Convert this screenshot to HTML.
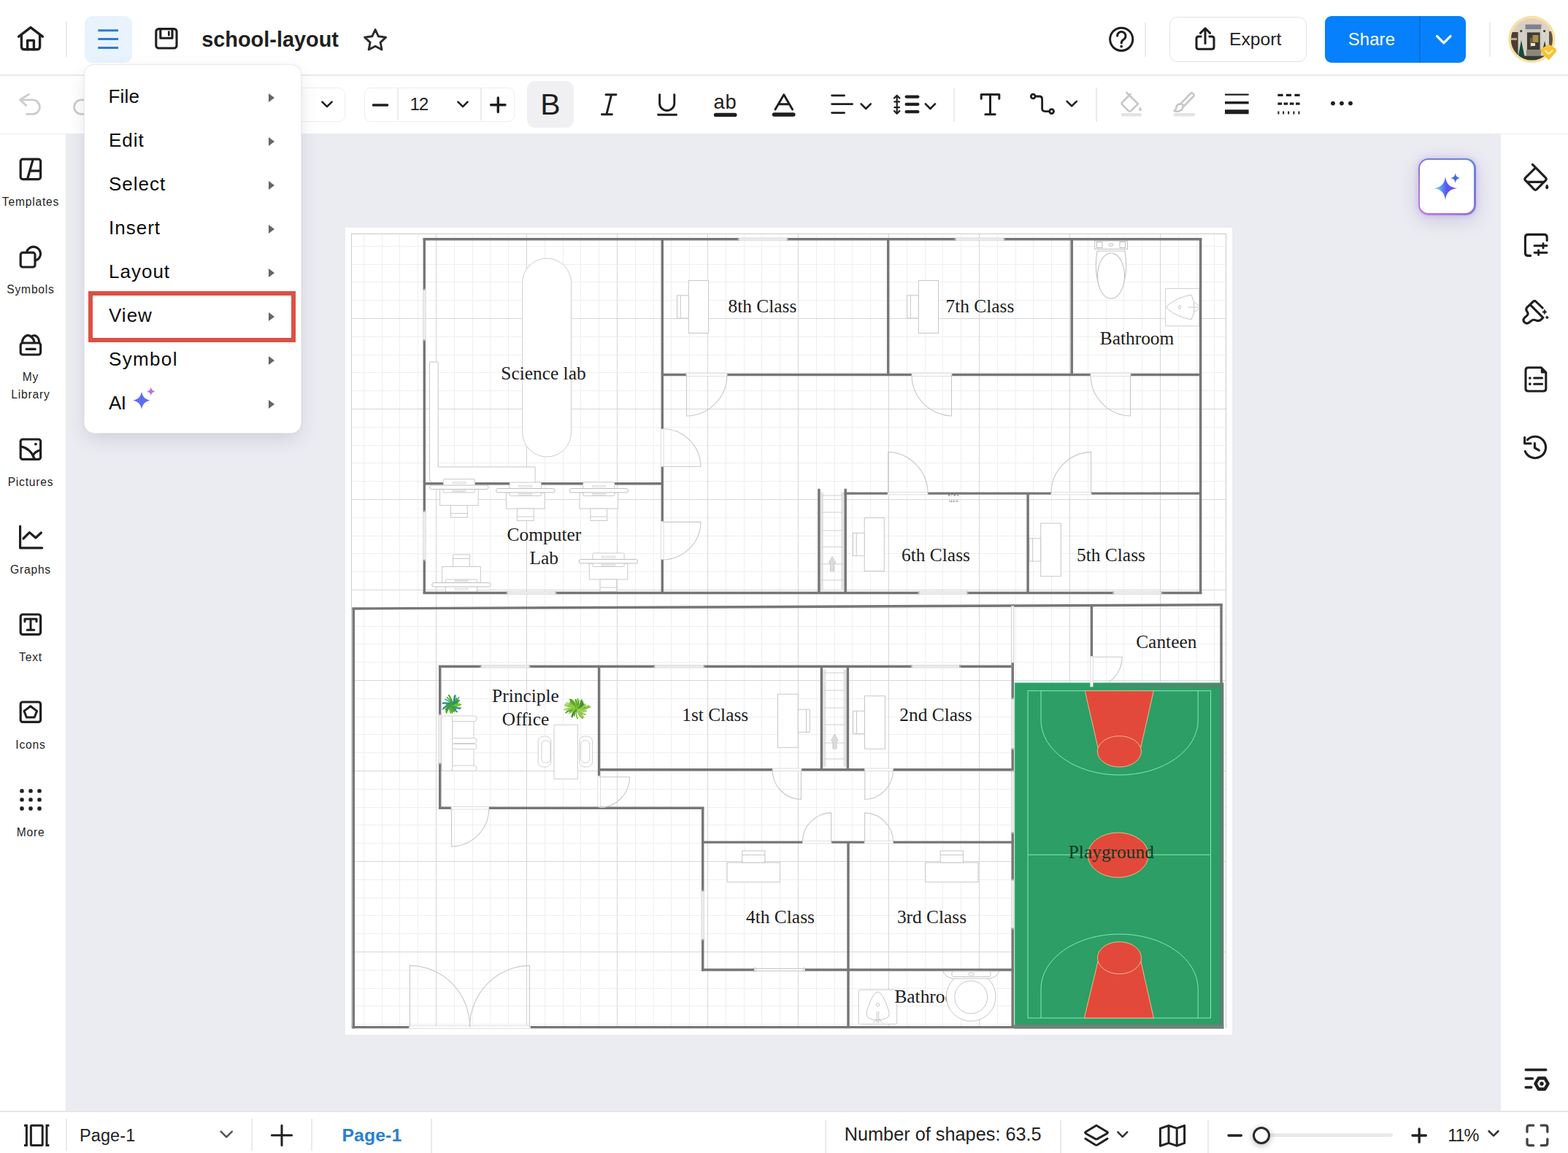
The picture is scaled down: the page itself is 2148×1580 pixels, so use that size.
<!DOCTYPE html>
<html lang="en">
<head>
<meta charset="utf-8">
<title>school-layout</title>
<style>
*{box-sizing:border-box;margin:0;padding:0}
html,body{width:2148px;height:1580px;overflow:hidden;background:#ebebf2}
body{position:relative;font-family:"Liberation Sans",sans-serif;color:#1e1e1e}
.abs{position:absolute}
.t{position:absolute;white-space:nowrap;line-height:1}
#canvas{position:absolute;left:0;top:0;width:2148px;height:1580px;background:#ebebf2}
#topbar{position:absolute;left:0;top:0;width:2148px;height:104px;background:#fff;border-bottom:2px solid #e9e9eb}
#toolbar{position:absolute;left:0;top:104px;width:2148px;height:80px;background:#fff;border-bottom:1px solid #ececee}
#leftbar{position:absolute;left:0;top:184px;width:90px;height:1340px;background:#fff}
#rightbar{position:absolute;left:2056px;top:184px;width:92px;height:1340px;background:#fff}
#bottombar{position:absolute;left:0;top:1521.6px;width:2148px;height:59px;background:#fff;border-top:2px solid #e6e6e8}
.vdiv{position:absolute;width:2px;background:#ebebed}
.lbl{position:absolute;left:0;width:84px;text-align:center;font-size:15.6px;letter-spacing:.8px;line-height:24px;color:#1e1e1e}
#menu{position:absolute;left:115px;top:88px;width:298px;height:506px;background:#fff;border-radius:14px;border:1px solid #ececee;box-shadow:0 10px 26px -4px rgba(60,60,90,.17),0 0 2px rgba(60,60,90,.08)}
.mi{position:absolute;left:33px;font-size:26px;letter-spacing:1px;line-height:30px;color:#0c0c0c;white-space:nowrap}
.arr{position:absolute;left:252px;width:0;height:0;border-left:8px solid #666;border-top:6px solid transparent;border-bottom:6px solid transparent}
svg{position:absolute;left:0;top:0;overflow:visible}
.plan text{font-family:"Liberation Serif",serif;font-size:25.4px;fill:#1c1c1c}
</style>
</head>
<body>
<div id="canvas"></div>
<div class="abs" style="left:473px;top:312px;width:1215px;height:1106px;background:#fff"></div>
<svg class="plan" width="2148" height="1580" viewBox="0 0 2148 1580">
<defs><clipPath id="gclip"><rect x="481.2" y="320.4" width="1198.5" height="1089"/></clipPath></defs>
<g shape-rendering="crispEdges" fill="none"><path d="M498.2 320.4V1409.4M523.0 320.4V1409.4M547.8 320.4V1409.4M572.6 320.4V1409.4M622.2 320.4V1409.4M647.0 320.4V1409.4M671.8 320.4V1409.4M696.6 320.4V1409.4M746.2 320.4V1409.4M771.0 320.4V1409.4M795.8 320.4V1409.4M820.6 320.4V1409.4M870.2 320.4V1409.4M895.0 320.4V1409.4M919.8 320.4V1409.4M944.6 320.4V1409.4M994.2 320.4V1409.4M1019.0 320.4V1409.4M1043.8 320.4V1409.4M1068.6 320.4V1409.4M1118.2 320.4V1409.4M1143.0 320.4V1409.4M1167.8 320.4V1409.4M1192.6 320.4V1409.4M1242.2 320.4V1409.4M1267.0 320.4V1409.4M1291.8 320.4V1409.4M1316.6 320.4V1409.4M1366.2 320.4V1409.4M1391.0 320.4V1409.4M1415.8 320.4V1409.4M1440.6 320.4V1409.4M1490.2 320.4V1409.4M1515.0 320.4V1409.4M1539.8 320.4V1409.4M1564.6 320.4V1409.4M1614.2 320.4V1409.4M1639.0 320.4V1409.4M1663.8 320.4V1409.4M481.2 337.3H1679.7M481.2 362.1H1679.7M481.2 386.9H1679.7M481.2 411.7H1679.7M481.2 461.3H1679.7M481.2 486.1H1679.7M481.2 510.9H1679.7M481.2 535.7H1679.7M481.2 585.3H1679.7M481.2 610.1H1679.7M481.2 634.9H1679.7M481.2 659.7H1679.7M481.2 709.3H1679.7M481.2 734.1H1679.7M481.2 758.9H1679.7M481.2 783.7H1679.7M481.2 833.3H1679.7M481.2 858.1H1679.7M481.2 882.9H1679.7M481.2 907.7H1679.7M481.2 957.3H1679.7M481.2 982.1H1679.7M481.2 1006.9H1679.7M481.2 1031.7H1679.7M481.2 1081.3H1679.7M481.2 1106.1H1679.7M481.2 1130.9H1679.7M481.2 1155.7H1679.7M481.2 1205.3H1679.7M481.2 1230.1H1679.7M481.2 1254.9H1679.7M481.2 1279.7H1679.7M481.2 1329.3H1679.7M481.2 1354.1H1679.7M481.2 1378.9H1679.7M481.2 1403.7H1679.7" stroke="#efefef" stroke-width="1"/><path d="M597.4 320.4V1409.4M721.4 320.4V1409.4M845.4 320.4V1409.4M969.4 320.4V1409.4M1093.4 320.4V1409.4M1217.4 320.4V1409.4M1341.4 320.4V1409.4M1465.4 320.4V1409.4M1589.4 320.4V1409.4M481.2 436.5H1679.7M481.2 560.5H1679.7M481.2 684.5H1679.7M481.2 808.5H1679.7M481.2 932.5H1679.7M481.2 1056.5H1679.7M481.2 1180.5H1679.7M481.2 1304.5H1679.7" stroke="#d6d6d6" stroke-width="1"/>
<path d="M481.2 1409.4V320.4H1679.7V1409.4" stroke="#cbcbcb" stroke-width="1"/></g>
<rect x="715.7" y="354" width="66.8" height="272" rx="33.4" fill="#fff" stroke="#cdcdcd" stroke-width="1"/>
<path d="M588.5 496H600.2V639.9H733.1V662H596Q588.5 662 588.5 654Z" fill="#fff" stroke="#c6c6c6" stroke-width="1"/>
<rect x="943.3" y="384.4" width="27.3" height="72.1" rx="0" fill="#fff" stroke="#c6c6c6" stroke-width="1"/>
<rect x="927.5" y="404.84999999999997" width="15.8" height="31.2" rx="0" fill="#fff" stroke="#c6c6c6" stroke-width="1"/>
<line x1="932.3" y1="404.84999999999997" x2="932.3" y2="436.05" stroke="#c6c6c6"/>
<rect x="1258.3" y="384.4" width="27.3" height="72.1" rx="0" fill="#fff" stroke="#c6c6c6" stroke-width="1"/>
<rect x="1242.5" y="404.84999999999997" width="15.8" height="31.2" rx="0" fill="#fff" stroke="#c6c6c6" stroke-width="1"/>
<line x1="1247.3" y1="404.84999999999997" x2="1247.3" y2="436.05" stroke="#c6c6c6"/>
<rect x="1184.2" y="709.5" width="27.1" height="73.1" rx="0" fill="#fff" stroke="#c6c6c6" stroke-width="1"/>
<rect x="1168.4" y="730.4499999999999" width="15.8" height="31.2" rx="0" fill="#fff" stroke="#c6c6c6" stroke-width="1"/>
<line x1="1173.2" y1="730.4499999999999" x2="1173.2" y2="761.65" stroke="#c6c6c6"/>
<rect x="1425.7" y="717.1" width="27.6" height="72.7" rx="0" fill="#fff" stroke="#c6c6c6" stroke-width="1"/>
<rect x="1409.9" y="737.85" width="15.8" height="31.2" rx="0" fill="#fff" stroke="#c6c6c6" stroke-width="1"/>
<line x1="1414.7" y1="737.85" x2="1414.7" y2="769.0500000000001" stroke="#c6c6c6"/>
<rect x="1499.8" y="330" width="44.6" height="11.3" rx="0" fill="#fff" stroke="#bdbdbd" stroke-width="1"/>
<rect x="1502.5" y="331.5" width="7.5" height="8.0" rx="0" fill="#fff" stroke="#bdbdbd" stroke-width="1"/>
<rect x="1534" y="331.5" width="7.5" height="8.0" rx="0" fill="#fff" stroke="#bdbdbd" stroke-width="1"/>
<ellipse cx="1522" cy="335.5" rx="3" ry="1.8" fill="#fff" stroke="#bdbdbd"/>
<path d="M1503 344Q1498 375 1508 397Q1522 420 1536 397Q1546 375 1541 344Z" fill="#fff" stroke="#c2c2c2" stroke-width="1.1"/>
<ellipse cx="1522" cy="378" rx="18.5" ry="31" fill="#fff" stroke="#c2c2c2" stroke-width="1.1"/>
<rect x="1596.6" y="395.4" width="46.4" height="51.3" rx="0" fill="#fff" stroke="#d0d0d0" stroke-width="1"/>
<path d="M1632 404Q1640 421 1632 438Q1612 434 1600 424Q1596 421 1600 418Q1612 408 1632 404Z" fill="#fff" stroke="#c6c6c6"/>
<circle cx="1616" cy="421" r="2" fill="none" stroke="#c6c6c6"/><path d="M1627 421H1642M1636 414L1642 419M1636 428L1642 423" stroke="#c9c9c9" fill="none"/>
<rect x="1123.7" y="673.7" width="4.2" height="134.69999999999993" rx="2" fill="#e3e3e3"/>
<rect x="1152.2" y="673.7" width="4.2" height="134.69999999999993" rx="2" fill="#e3e3e3"/>
<line x1="1125.9" y1="679" x2="1154.2" y2="679" stroke="#cfcfcf" stroke-width="1"/>
<line x1="1125.9" y1="702" x2="1154.2" y2="702" stroke="#cfcfcf" stroke-width="1"/>
<line x1="1125.9" y1="727" x2="1154.2" y2="727" stroke="#cfcfcf" stroke-width="1"/>
<line x1="1125.9" y1="749.4" x2="1154.2" y2="749.4" stroke="#cfcfcf" stroke-width="1"/>
<line x1="1125.9" y1="773" x2="1154.2" y2="773" stroke="#cfcfcf" stroke-width="1"/>
<line x1="1125.9" y1="795" x2="1154.2" y2="795" stroke="#cfcfcf" stroke-width="1"/>
<path d="M1140.0500000000002 762.7L1145.0500000000002 771.7H1142.65V782.7H1137.4500000000003V771.7H1135.0500000000002Z" fill="#dcdcdc" stroke="#c4c4c4" stroke-width="0.8"/>
<rect x="1127.2" y="917" width="4.2" height="134" rx="2" fill="#e3e3e3"/>
<rect x="1155.4" y="917" width="4.2" height="134" rx="2" fill="#e3e3e3"/>
<line x1="1129.4" y1="922" x2="1157.4" y2="922" stroke="#cfcfcf" stroke-width="1"/>
<line x1="1129.4" y1="946" x2="1157.4" y2="946" stroke="#cfcfcf" stroke-width="1"/>
<line x1="1129.4" y1="970" x2="1157.4" y2="970" stroke="#cfcfcf" stroke-width="1"/>
<line x1="1129.4" y1="993" x2="1157.4" y2="993" stroke="#cfcfcf" stroke-width="1"/>
<line x1="1129.4" y1="1018" x2="1157.4" y2="1018" stroke="#cfcfcf" stroke-width="1"/>
<line x1="1129.4" y1="1040" x2="1157.4" y2="1040" stroke="#cfcfcf" stroke-width="1"/>
<path d="M1143.4 1006L1148.4 1015H1146.0V1026H1140.8000000000002V1015H1138.4Z" fill="#dcdcdc" stroke="#c4c4c4" stroke-width="0.8"/>
<rect x="605.7" y="776.5" width="52.6" height="22.0" rx="0" fill="#fff" stroke="#cacaca" stroke-width="1"/>
<rect x="620.6" y="760" width="22.8" height="16.5" rx="0" fill="#fff" stroke="#cacaca" stroke-width="1"/>
<line x1="620.6" y1="765.5" x2="643.4" y2="765.5" stroke="#cacaca"/>
<rect x="610.4" y="794" width="43.2" height="18.5" rx="1.5" fill="#fff" stroke="#cacaca" stroke-width="1"/>
<rect x="591.8" y="798.6" width="80.4" height="5.4" rx="2.6" fill="#fff" stroke="#bdbdbd" stroke-width="1"/>
<rect x="623" y="806.3" width="18" height="2.0" rx="0" fill="#fff" stroke="#d0d0d0" stroke-width="0.8"/>
<rect x="623" y="795.4" width="18" height="1.6" rx="0" fill="#fff" stroke="#d0d0d0" stroke-width="0.8"/>
<line x1="579.5" y1="327.8" x2="1012" y2="327.8" stroke="#767676" stroke-width="3.45"/>
<line x1="1078.4" y1="327.8" x2="1309" y2="327.8" stroke="#767676" stroke-width="3.45"/>
<line x1="1375.4" y1="327.8" x2="1646.4" y2="327.8" stroke="#767676" stroke-width="3.45"/>
<line x1="579.5" y1="812.4" x2="694.8" y2="812.4" stroke="#767676" stroke-width="3.45"/>
<line x1="761.2" y1="812.4" x2="1258.8" y2="812.4" stroke="#767676" stroke-width="3.45"/>
<line x1="1325" y1="812.4" x2="1525.4" y2="812.4" stroke="#767676" stroke-width="3.45"/>
<line x1="1590.9" y1="812.4" x2="1646.4" y2="812.4" stroke="#767676" stroke-width="3.45"/>
<line x1="581.3" y1="327.8" x2="581.3" y2="397" stroke="#767676" stroke-width="3.45"/>
<line x1="581.3" y1="466" x2="581.3" y2="701" stroke="#767676" stroke-width="3.45"/>
<line x1="581.3" y1="767.4" x2="581.3" y2="812.4" stroke="#767676" stroke-width="3.45"/>
<line x1="1644.6" y1="327.8" x2="1644.6" y2="812.4" stroke="#767676" stroke-width="3.45"/>
<line x1="907.3" y1="327.8" x2="907.3" y2="588" stroke="#767676" stroke-width="3.45"/>
<line x1="907.3" y1="639.3" x2="907.3" y2="714.3" stroke="#767676" stroke-width="3.45"/>
<line x1="907.3" y1="766.5" x2="907.3" y2="812.4" stroke="#767676" stroke-width="3.45"/>
<line x1="1216.7" y1="327.8" x2="1216.7" y2="513.5" stroke="#767676" stroke-width="3.45"/>
<line x1="1468.3" y1="327.8" x2="1468.3" y2="513.5" stroke="#767676" stroke-width="3.45"/>
<line x1="907.3" y1="513.5" x2="940" y2="513.5" stroke="#767676" stroke-width="3.45"/>
<line x1="996" y1="513.5" x2="1249" y2="513.5" stroke="#767676" stroke-width="3.45"/>
<line x1="1304" y1="513.5" x2="1494" y2="513.5" stroke="#767676" stroke-width="3.45"/>
<line x1="1549" y1="513.5" x2="1644.6" y2="513.5" stroke="#767676" stroke-width="3.45"/>
<line x1="581.3" y1="662.8" x2="907.3" y2="662.8" stroke="#767676" stroke-width="3.45"/>
<line x1="1121.9" y1="669.7" x2="1121.9" y2="812.4" stroke="#767676" stroke-width="3.45"/>
<line x1="1158.2" y1="669.7" x2="1158.2" y2="812.4" stroke="#767676" stroke-width="3.45"/>
<line x1="1156.4" y1="676.1" x2="1216" y2="676.1" stroke="#767676" stroke-width="3.45"/>
<line x1="1271" y1="676.1" x2="1440" y2="676.1" stroke="#767676" stroke-width="3.45"/>
<line x1="1495" y1="676.1" x2="1644.6" y2="676.1" stroke="#767676" stroke-width="3.45"/>
<line x1="1408.1" y1="676.1" x2="1408.1" y2="812.4" stroke="#767676" stroke-width="3.45"/>
<rect x="1012" y="325.90000000000003" width="66.40000000000009" height="3.8" fill="#ebebeb" stroke="#d2d2d2" stroke-width="0.6"/>
<rect x="1010.5" y="325.90000000000003" width="2" height="3.8" fill="#aaa"/><rect x="1077.9" y="325.90000000000003" width="2" height="3.8" fill="#aaa"/>
<rect x="1309" y="325.90000000000003" width="66.40000000000009" height="3.8" fill="#ebebeb" stroke="#d2d2d2" stroke-width="0.6"/>
<rect x="1307.5" y="325.90000000000003" width="2" height="3.8" fill="#aaa"/><rect x="1374.9" y="325.90000000000003" width="2" height="3.8" fill="#aaa"/>
<rect x="694.8" y="810.5" width="66.40000000000009" height="3.8" fill="#ebebeb" stroke="#d2d2d2" stroke-width="0.6"/>
<rect x="693.3" y="810.5" width="2" height="3.8" fill="#aaa"/><rect x="760.7" y="810.5" width="2" height="3.8" fill="#aaa"/>
<rect x="1258.8" y="810.5" width="66.20000000000005" height="3.8" fill="#ebebeb" stroke="#d2d2d2" stroke-width="0.6"/>
<rect x="1257.3" y="810.5" width="2" height="3.8" fill="#aaa"/><rect x="1324.5" y="810.5" width="2" height="3.8" fill="#aaa"/>
<rect x="1525.4" y="810.5" width="65.5" height="3.8" fill="#ebebeb" stroke="#d2d2d2" stroke-width="0.6"/>
<rect x="1523.9" y="810.5" width="2" height="3.8" fill="#aaa"/><rect x="1590.4" y="810.5" width="2" height="3.8" fill="#aaa"/>
<rect x="579.4" y="397" width="3.8" height="69" fill="#ebebeb" stroke="#d2d2d2" stroke-width="0.6"/>
<rect x="579.4" y="395.5" width="3.8" height="2" fill="#aaa"/><rect x="579.4" y="465.5" width="3.8" height="2" fill="#aaa"/>
<rect x="579.4" y="701" width="3.8" height="66.39999999999998" fill="#ebebeb" stroke="#d2d2d2" stroke-width="0.6"/>
<rect x="579.4" y="699.5" width="3.8" height="2" fill="#aaa"/><rect x="579.4" y="766.9" width="3.8" height="2" fill="#aaa"/>
<rect x="940" y="511.7" width="56" height="3.6" fill="#fff" stroke="#d0d0d0" stroke-width="0.7"/>
<rect x="1249" y="511.7" width="55" height="3.6" fill="#fff" stroke="#d0d0d0" stroke-width="0.7"/>
<rect x="1494" y="511.7" width="55" height="3.6" fill="#fff" stroke="#d0d0d0" stroke-width="0.7"/>
<rect x="1216" y="674.3000000000001" width="55" height="3.6" fill="#fff" stroke="#d0d0d0" stroke-width="0.7"/>
<rect x="1440" y="674.3000000000001" width="55" height="3.6" fill="#fff" stroke="#d0d0d0" stroke-width="0.7"/>
<rect x="905.5" y="588" width="3.6" height="51.299999999999955" fill="#fff" stroke="#d0d0d0" stroke-width="0.7"/>
<rect x="905.5" y="714.3" width="3.6" height="52.200000000000045" fill="#fff" stroke="#d0d0d0" stroke-width="0.7"/>
<path d="M940.5 513.5L940.5 570A56.5 56.5 0 0 0 996 513.5" fill="none" stroke="#c8c8c8" stroke-width="1.1"/>
<path d="M1303.5 513.5L1303.5 570A56.5 56.5 0 0 1 1249 513.5" fill="none" stroke="#c8c8c8" stroke-width="1.1"/>
<path d="M1548.5 513.5L1548.5 570A56.5 56.5 0 0 1 1494 513.5" fill="none" stroke="#c8c8c8" stroke-width="1.1"/>
<path d="M907.3 639.3L960 639.3A52.700000000000045 52.700000000000045 0 0 0 907.3 587.5" fill="none" stroke="#c8c8c8" stroke-width="1.1"/>
<path d="M907.3 715.4L960 715.4A52.700000000000045 52.700000000000045 0 0 1 907.3 767" fill="none" stroke="#c8c8c8" stroke-width="1.1"/>
<path d="M1216.7 676.1L1216.7 619.4A56.700000000000045 56.700000000000045 0 0 1 1271 676.1" fill="none" stroke="#c8c8c8" stroke-width="1.1"/>
<path d="M1494.6 676.1L1494.6 619.4A56.700000000000045 56.700000000000045 0 0 0 1440 676.1" fill="none" stroke="#c8c8c8" stroke-width="1.1"/>
<rect x="602.6" y="670.5" width="52.6" height="22.0" rx="0" fill="#fff" stroke="#cacaca" stroke-width="1"/>
<rect x="617.5" y="692.5" width="22.8" height="16.5" rx="0" fill="#fff" stroke="#cacaca" stroke-width="1"/>
<line x1="617.5" y1="703.5" x2="640.3" y2="703.5" stroke="#cacaca"/>
<rect x="607.3" y="656.5" width="43.2" height="18.5" rx="1.5" fill="#fff" stroke="#cacaca" stroke-width="1"/>
<rect x="588.6999999999999" y="665" width="80.4" height="5.4" rx="2.6" fill="#fff" stroke="#bdbdbd" stroke-width="1"/>
<rect x="619.9" y="660.7" width="18.0" height="2.0" rx="0" fill="#fff" stroke="#d0d0d0" stroke-width="0.8"/>
<rect x="619.9" y="672" width="18.0" height="1.6" rx="0" fill="#fff" stroke="#d0d0d0" stroke-width="0.8"/>
<rect x="693.5" y="675.0" width="52.6" height="22.0" rx="0" fill="#fff" stroke="#cacaca" stroke-width="1"/>
<rect x="708.4" y="697.0" width="22.8" height="16.5" rx="0" fill="#fff" stroke="#cacaca" stroke-width="1"/>
<line x1="708.4" y1="708.0" x2="731.1999999999999" y2="708.0" stroke="#cacaca"/>
<rect x="698.1999999999999" y="661.0" width="43.2" height="18.5" rx="1.5" fill="#fff" stroke="#cacaca" stroke-width="1"/>
<rect x="679.5999999999999" y="669.5" width="80.4" height="5.4" rx="2.6" fill="#fff" stroke="#bdbdbd" stroke-width="1"/>
<rect x="710.8" y="665.2" width="18.0" height="2.0" rx="0" fill="#fff" stroke="#d0d0d0" stroke-width="0.8"/>
<rect x="710.8" y="676.5" width="18.0" height="1.6" rx="0" fill="#fff" stroke="#d0d0d0" stroke-width="0.8"/>
<rect x="794.0" y="675.0" width="52.6" height="22.0" rx="0" fill="#fff" stroke="#cacaca" stroke-width="1"/>
<rect x="808.9" y="697.0" width="22.8" height="16.5" rx="0" fill="#fff" stroke="#cacaca" stroke-width="1"/>
<line x1="808.9" y1="708.0" x2="831.6999999999999" y2="708.0" stroke="#cacaca"/>
<rect x="798.6999999999999" y="661.0" width="43.2" height="18.5" rx="1.5" fill="#fff" stroke="#cacaca" stroke-width="1"/>
<rect x="780.0999999999999" y="669.5" width="80.4" height="5.4" rx="2.6" fill="#fff" stroke="#bdbdbd" stroke-width="1"/>
<rect x="811.3" y="665.2" width="18.0" height="2.0" rx="0" fill="#fff" stroke="#d0d0d0" stroke-width="0.8"/>
<rect x="811.3" y="676.5" width="18.0" height="1.6" rx="0" fill="#fff" stroke="#d0d0d0" stroke-width="0.8"/>
<rect x="807.2" y="772.0" width="52.6" height="22.0" rx="0" fill="#fff" stroke="#cacaca" stroke-width="1"/>
<rect x="822.1" y="794.0" width="22.8" height="16.5" rx="0" fill="#fff" stroke="#cacaca" stroke-width="1"/>
<line x1="822.1" y1="805.0" x2="844.9" y2="805.0" stroke="#cacaca"/>
<rect x="811.9" y="758.0" width="43.2" height="18.5" rx="1.5" fill="#fff" stroke="#cacaca" stroke-width="1"/>
<rect x="793.3" y="766.5" width="80.4" height="5.4" rx="2.6" fill="#fff" stroke="#bdbdbd" stroke-width="1"/>
<rect x="824.5" y="762.2" width="18.0" height="2.0" rx="0" fill="#fff" stroke="#d0d0d0" stroke-width="0.8"/>
<rect x="824.5" y="773.5" width="18.0" height="1.6" rx="0" fill="#fff" stroke="#d0d0d0" stroke-width="0.8"/>
<text x="1306" y="679.5" text-anchor="middle" style="font-size:5px;fill:#333">8.7 ft x</text>
<text x="1306" y="688.3" text-anchor="middle" style="font-size:5px;fill:#555">14.6 ft</text>
<path d="M1495.4 900.3L1537.2 900.3A41.799999999999955 41.799999999999955 0 0 1 1495.4 942" fill="none" stroke="#c8c8c8" stroke-width="1.1"/>
<rect x="1389.4" y="935" width="286.8" height="474.4" fill="#2c9e66"/>
<path d="M1389.6 1409.4V935.2H1676.2" fill="none" stroke="#b5f3d8" stroke-width="1.2"/>
<defs><linearGradient id="tsh" x1="0" y1="0" x2="1" y2="0"><stop offset="0" stop-color="#5f7f70" stop-opacity="0"/><stop offset="0.25" stop-color="#5f7f70" stop-opacity="0.45"/><stop offset="1" stop-color="#5f7f70" stop-opacity="0.8"/></linearGradient></defs>
<rect x="1497" y="936" width="179" height="6.4" fill="url(#tsh)"/>
<g fill="none" stroke="#86e8bb" stroke-width="1">
<rect x="1408.1" y="946.6" width="250.4" height="448.4"/>
<line x1="1408.1" y1="1171.3" x2="1658.5" y2="1171.3"/>
<path d="M1426 946.6V987A107.6 75 0 0 0 1641.2 987V946.6"/>
<path d="M1426 1395V1355A107.6 75 0 0 1 1641.2 1355V1395"/>
</g>
<path d="M1486.2 946.6H1580.4L1562.6 1025A30 21.2 0 0 1 1504.2 1025Z" fill="#e2493a" stroke="#f5c48e" stroke-width="0.9"/>
<ellipse cx="1533.4" cy="1029.8" rx="30" ry="21.2" fill="#e2493a" stroke="#f5c48e" stroke-width="0.9"/>
<path d="M1485.4 1395H1580.4L1562.8 1317A30 22 0 0 0 1504.2 1317Z" fill="#e2493a" stroke="#f5c48e" stroke-width="0.9"/>
<ellipse cx="1533.5" cy="1312.6" rx="30" ry="22" fill="#e2493a" stroke="#f5c48e" stroke-width="0.9"/>
<ellipse cx="1531.7" cy="1171.7" rx="41.5" ry="30.7" fill="#e2493a" stroke="#f5c48e" stroke-width="0.9"/>
<line x1="1490.2" y1="1171.3" x2="1573.2" y2="1171.3" stroke="#ee8a6a" stroke-width="0.8"/>
<rect x="1065.4" y="951.2" width="27.9" height="73.1" rx="0" fill="#fff" stroke="#c6c6c6" stroke-width="1"/>
<rect x="1093.3" y="972.15" width="16.0" height="31.2" rx="0" fill="#fff" stroke="#c6c6c6" stroke-width="1"/>
<line x1="1104.6" y1="972.15" x2="1104.6" y2="1003.35" stroke="#c6c6c6"/>
<rect x="1184.5" y="953.7" width="27.9" height="72.5" rx="0" fill="#fff" stroke="#c6c6c6" stroke-width="1"/>
<rect x="1168.7" y="974.35" width="15.8" height="31.2" rx="0" fill="#fff" stroke="#c6c6c6" stroke-width="1"/>
<line x1="1173.5" y1="974.35" x2="1173.5" y2="1005.5500000000001" stroke="#c6c6c6"/>
<rect x="996.1" y="1182" width="72.4" height="26.8" rx="0" fill="#fff" stroke="#c6c6c6" stroke-width="1"/>
<rect x="1016.6999999999999" y="1166" width="31.2" height="16" rx="0" fill="#fff" stroke="#c6c6c6" stroke-width="1"/>
<line x1="1016.6999999999999" y1="1171.6" x2="1047.8999999999999" y2="1171.6" stroke="#c6c6c6"/>
<rect x="1267.6" y="1182" width="72.4" height="26.8" rx="0" fill="#fff" stroke="#c6c6c6" stroke-width="1"/>
<rect x="1288.2" y="1166" width="31.2" height="16" rx="0" fill="#fff" stroke="#c6c6c6" stroke-width="1"/>
<line x1="1288.2" y1="1171.6" x2="1319.3999999999999" y2="1171.6" stroke="#c6c6c6"/>
<rect x="604.8" y="981" width="15.2" height="75.4" rx="3" fill="#fff" stroke="#cfcfcf" stroke-width="1"/>
<rect x="620" y="986" width="29" height="66" rx="0" fill="#fff" stroke="#cfcfcf" stroke-width="1"/>
<rect x="619" y="981" width="34.2" height="7.5" rx="3.5" fill="#fff" stroke="#cfcfcf" stroke-width="1"/>
<rect x="619" y="1011.5" width="34.2" height="7.0" rx="3.5" fill="#fff" stroke="#cfcfcf" stroke-width="1"/>
<rect x="619" y="1019.5" width="34.2" height="7.0" rx="3.5" fill="#fff" stroke="#cfcfcf" stroke-width="1"/>
<rect x="619" y="1049" width="34.2" height="7.4" rx="3.5" fill="#fff" stroke="#cfcfcf" stroke-width="1"/>
<rect x="737.2" y="1009" width="17.6" height="42" rx="7" fill="#fff" stroke="#cfcfcf"/>
<rect x="742.0" y="1015" width="12" height="30" rx="4.5" fill="#fff" stroke="#cfcfcf"/>
<rect x="793.9000000000001" y="1009" width="17.6" height="42" rx="7" fill="#fff" stroke="#cfcfcf"/>
<rect x="795.7" y="1015" width="12" height="30" rx="4.5" fill="#fff" stroke="#cfcfcf"/>
<rect x="759" y="993.3" width="32.4" height="74.1" rx="0" fill="#fff" stroke="#cdcdcd" stroke-width="1"/>
<path d="M619.3 965.7Q618.2 969.8 620.0 974.1" stroke="#1f8f7a" stroke-width="1.8" fill="none" stroke-linecap="round"/>
<path d="M619.3 965.7Q621.7 968.8 626.0 970.0" stroke="#2aa08a" stroke-width="2.3" fill="none" stroke-linecap="round"/>
<path d="M619.3 965.7Q623.2 960.7 623.3 953.6" stroke="#6cba22" stroke-width="1.8" fill="none" stroke-linecap="round"/>
<path d="M619.3 965.7Q613.8 968.9 611.1 975.5" stroke="#58a81c" stroke-width="1.5" fill="none" stroke-linecap="round"/>
<path d="M619.3 965.7Q623.3 965.7 626.8 962.9" stroke="#78c428" stroke-width="2.2" fill="none" stroke-linecap="round"/>
<path d="M619.3 965.7Q622.1 962.1 622.1 957.1" stroke="#4a9e2a" stroke-width="1.5" fill="none" stroke-linecap="round"/>
<path d="M619.3 965.7Q625.5 962.5 628.7 955.4" stroke="#4a9e2a" stroke-width="1.3" fill="none" stroke-linecap="round"/>
<path d="M619.3 965.7Q616.1 960.6 609.8 958.2" stroke="#2aa08a" stroke-width="1.5" fill="none" stroke-linecap="round"/>
<path d="M619.3 965.7Q617.7 970.2 619.5 975.3" stroke="#2aa08a" stroke-width="2.2" fill="none" stroke-linecap="round"/>
<path d="M619.3 965.7Q623.8 967.6 629.0 966.1" stroke="#78c428" stroke-width="2.3" fill="none" stroke-linecap="round"/>
<path d="M619.3 965.7Q623.8 962.6 625.7 956.7" stroke="#1f8f7a" stroke-width="1.7" fill="none" stroke-linecap="round"/>
<path d="M619.3 965.7Q616.3 970.1 616.8 976.1" stroke="#6cba22" stroke-width="1.6" fill="none" stroke-linecap="round"/>
<path d="M619.3 965.7Q622.0 962.7 622.4 958.2" stroke="#58a81c" stroke-width="1.8" fill="none" stroke-linecap="round"/>
<path d="M619.3 965.7Q624.6 967.5 630.4 965.5" stroke="#78c428" stroke-width="1.8" fill="none" stroke-linecap="round"/>
<path d="M619.3 965.7Q613.6 969.9 611.5 977.5" stroke="#6cba22" stroke-width="1.3" fill="none" stroke-linecap="round"/>
<path d="M619.3 965.7Q625.1 964.6 629.5 959.6" stroke="#1f8f7a" stroke-width="1.5" fill="none" stroke-linecap="round"/>
<path d="M619.3 965.7Q614.0 969.0 611.5 975.6" stroke="#4a9e2a" stroke-width="2.0" fill="none" stroke-linecap="round"/>
<path d="M619.3 965.7Q619.2 970.6 622.4 975.1" stroke="#58a81c" stroke-width="2.0" fill="none" stroke-linecap="round"/>
<path d="M619.3 965.7Q616.4 970.7 617.3 977.1" stroke="#6cba22" stroke-width="1.3" fill="none" stroke-linecap="round"/>
<path d="M619.3 965.7Q624.1 965.4 628.2 961.8" stroke="#58a81c" stroke-width="1.3" fill="none" stroke-linecap="round"/>
<path d="M619.3 965.7Q619.4 958.9 614.9 952.9" stroke="#4a9e2a" stroke-width="2.1" fill="none" stroke-linecap="round"/>
<path d="M619.3 965.7Q623.2 966.1 627.0 963.7" stroke="#4a9e2a" stroke-width="1.6" fill="none" stroke-linecap="round"/>
<path d="M619.3 965.7Q620.8 971.5 626.2 975.5" stroke="#2aa08a" stroke-width="2.0" fill="none" stroke-linecap="round"/>
<path d="M619.3 965.7Q623.2 970.1 629.7 971.2" stroke="#1f8f7a" stroke-width="1.6" fill="none" stroke-linecap="round"/>
<path d="M619.3 965.7Q617.3 971.2 619.3 977.3" stroke="#6cba22" stroke-width="1.6" fill="none" stroke-linecap="round"/>
<path d="M619.3 965.7Q623.0 967.3 627.4 966.2" stroke="#6cba22" stroke-width="1.6" fill="none" stroke-linecap="round"/>
<path d="M619.3 965.7Q623.8 960.2 624.0 952.3" stroke="#2aa08a" stroke-width="1.3" fill="none" stroke-linecap="round"/>
<path d="M619.3 965.7Q624.4 966.9 629.7 964.5" stroke="#6cba22" stroke-width="1.3" fill="none" stroke-linecap="round"/>
<path d="M619.3 965.7Q623.9 969.9 630.9 970.5" stroke="#2aa08a" stroke-width="2.0" fill="none" stroke-linecap="round"/>
<path d="M619.3 965.7Q620.4 969.6 624.1 972.2" stroke="#1f8f7a" stroke-width="1.9" fill="none" stroke-linecap="round"/>
<path d="M619.3 965.7Q616.4 968.5 615.8 972.9" stroke="#2aa08a" stroke-width="1.6" fill="none" stroke-linecap="round"/>
<path d="M619.3 965.7Q625.0 967.6 631.3 965.5" stroke="#6cba22" stroke-width="1.8" fill="none" stroke-linecap="round"/>
<path d="M619.3 965.7Q617.8 970.7 619.8 976.1" stroke="#58a81c" stroke-width="1.5" fill="none" stroke-linecap="round"/>
<path d="M619.3 965.7Q613.3 965.7 608.1 969.9" stroke="#1f8f7a" stroke-width="2.2" fill="none" stroke-linecap="round"/>
<path d="M619.3 965.7Q615.5 964.4 611.3 965.8" stroke="#4a9e2a" stroke-width="1.5" fill="none" stroke-linecap="round"/>
<path d="M619.3 965.7Q613.7 962.6 606.7 963.7" stroke="#1f8f7a" stroke-width="2.2" fill="none" stroke-linecap="round"/>
<path d="M619.3 965.7Q620.6 969.5 624.4 972.0" stroke="#4a9e2a" stroke-width="1.9" fill="none" stroke-linecap="round"/>
<path d="M619.3 965.7Q624.3 967.2 629.7 965.1" stroke="#78c428" stroke-width="2.0" fill="none" stroke-linecap="round"/>
<path d="M619.3 965.7Q622.9 960.5 622.5 953.5" stroke="#1f8f7a" stroke-width="1.7" fill="none" stroke-linecap="round"/>
<path d="M619.3 965.7Q612.5 966.3 606.9 971.5" stroke="#2aa08a" stroke-width="2.3" fill="none" stroke-linecap="round"/>
<path d="M619.3 965.7Q624.2 965.1 628.2 961.2" stroke="#78c428" stroke-width="1.8" fill="none" stroke-linecap="round"/>
<path d="M619.3 965.7Q624.0 964.4 627.3 960.0" stroke="#1f8f7a" stroke-width="1.8" fill="none" stroke-linecap="round"/>
<path d="M619.3 965.7Q617.8 959.8 612.4 955.6" stroke="#4a9e2a" stroke-width="1.6" fill="none" stroke-linecap="round"/>
<path d="M619.3 965.7Q614.1 967.5 610.7 972.6" stroke="#4a9e2a" stroke-width="2.4" fill="none" stroke-linecap="round"/>
<path d="M790.6 971.3Q789.7 967.2 785.5 964.0" stroke="#a0d060" stroke-width="1.4" fill="none" stroke-linecap="round"/>
<path d="M790.6 971.3Q798.3 972.2 805.9 968.8" stroke="#4c9a1e" stroke-width="2.2" fill="none" stroke-linecap="round"/>
<path d="M790.6 971.3Q790.3 965.7 785.3 961.0" stroke="#3a8a28" stroke-width="2.1" fill="none" stroke-linecap="round"/>
<path d="M790.6 971.3Q796.5 970.8 801.3 967.1" stroke="#4c9a1e" stroke-width="1.5" fill="none" stroke-linecap="round"/>
<path d="M790.6 971.3Q792.4 977.2 799.0 981.4" stroke="#88c83c" stroke-width="1.3" fill="none" stroke-linecap="round"/>
<path d="M790.6 971.3Q796.1 966.3 796.7 958.9" stroke="#6cb828" stroke-width="1.9" fill="none" stroke-linecap="round"/>
<path d="M790.6 971.3Q796.0 969.4 799.1 964.8" stroke="#5aa820" stroke-width="1.9" fill="none" stroke-linecap="round"/>
<path d="M790.6 971.3Q795.8 967.1 796.8 960.6" stroke="#3a8a28" stroke-width="2.3" fill="none" stroke-linecap="round"/>
<path d="M790.6 971.3Q785.2 971.4 780.6 974.5" stroke="#5aa820" stroke-width="1.9" fill="none" stroke-linecap="round"/>
<path d="M790.6 971.3Q782.3 969.4 773.4 972.3" stroke="#a0d060" stroke-width="2.1" fill="none" stroke-linecap="round"/>
<path d="M790.6 971.3Q795.0 973.8 801.0 973.5" stroke="#a0d060" stroke-width="2.3" fill="none" stroke-linecap="round"/>
<path d="M790.6 971.3Q786.7 975.5 786.8 981.2" stroke="#4c9a1e" stroke-width="1.3" fill="none" stroke-linecap="round"/>
<path d="M790.6 971.3Q785.2 968.2 777.8 968.4" stroke="#88c83c" stroke-width="1.7" fill="none" stroke-linecap="round"/>
<path d="M790.6 971.3Q794.0 965.0 791.5 957.6" stroke="#3a8a28" stroke-width="1.3" fill="none" stroke-linecap="round"/>
<path d="M790.6 971.3Q794.3 976.7 802.1 979.3" stroke="#88c83c" stroke-width="1.8" fill="none" stroke-linecap="round"/>
<path d="M790.6 971.3Q782.0 971.7 774.8 976.9" stroke="#3a8a28" stroke-width="1.3" fill="none" stroke-linecap="round"/>
<path d="M790.6 971.3Q796.0 969.5 799.2 964.9" stroke="#88c83c" stroke-width="2.3" fill="none" stroke-linecap="round"/>
<path d="M790.6 971.3Q785.2 970.3 779.6 972.5" stroke="#a0d060" stroke-width="1.4" fill="none" stroke-linecap="round"/>
<path d="M790.6 971.3Q795.8 969.3 798.8 964.7" stroke="#6cb828" stroke-width="1.6" fill="none" stroke-linecap="round"/>
<path d="M790.6 971.3Q795.9 968.8 798.4 963.7" stroke="#4c9a1e" stroke-width="2.1" fill="none" stroke-linecap="round"/>
<path d="M790.6 971.3Q796.5 973.2 803.3 971.7" stroke="#a0d060" stroke-width="1.3" fill="none" stroke-linecap="round"/>
<path d="M790.6 971.3Q794.7 966.2 794.0 959.5" stroke="#a0d060" stroke-width="1.3" fill="none" stroke-linecap="round"/>
<path d="M790.6 971.3Q787.9 977.8 791.1 985.0" stroke="#88c83c" stroke-width="1.5" fill="none" stroke-linecap="round"/>
<path d="M790.6 971.3Q791.4 978.2 797.9 983.8" stroke="#4c9a1e" stroke-width="2.0" fill="none" stroke-linecap="round"/>
<path d="M790.6 971.3Q787.4 966.9 780.8 964.8" stroke="#3a8a28" stroke-width="2.1" fill="none" stroke-linecap="round"/>
<path d="M790.6 971.3Q784.2 966.3 774.3 965.3" stroke="#a0d060" stroke-width="2.1" fill="none" stroke-linecap="round"/>
<path d="M790.6 971.3Q787.2 966.5 780.1 964.1" stroke="#6cb828" stroke-width="1.5" fill="none" stroke-linecap="round"/>
<path d="M790.6 971.3Q785.4 965.3 775.6 962.9" stroke="#88c83c" stroke-width="1.4" fill="none" stroke-linecap="round"/>
<path d="M790.6 971.3Q794.3 974.8 800.4 975.8" stroke="#a0d060" stroke-width="1.4" fill="none" stroke-linecap="round"/>
<path d="M790.6 971.3Q797.0 969.9 801.4 965.2" stroke="#a0d060" stroke-width="2.2" fill="none" stroke-linecap="round"/>
<path d="M790.6 971.3Q789.5 964.4 782.7 958.9" stroke="#4c9a1e" stroke-width="1.7" fill="none" stroke-linecap="round"/>
<path d="M790.6 971.3Q796.4 971.1 801.3 967.7" stroke="#5aa820" stroke-width="1.6" fill="none" stroke-linecap="round"/>
<path d="M790.6 971.3Q791.7 978.2 798.6 983.7" stroke="#a0d060" stroke-width="1.2" fill="none" stroke-linecap="round"/>
<path d="M790.6 971.3Q799.1 971.5 806.7 967.1" stroke="#88c83c" stroke-width="2.2" fill="none" stroke-linecap="round"/>
<path d="M790.6 971.3Q796.3 971.6 801.5 968.7" stroke="#a0d060" stroke-width="2.4" fill="none" stroke-linecap="round"/>
<path d="M790.6 971.3Q788.7 964.1 780.9 958.9" stroke="#4c9a1e" stroke-width="2.1" fill="none" stroke-linecap="round"/>
<path d="M790.6 971.3Q796.1 972.0 801.5 969.6" stroke="#5aa820" stroke-width="1.8" fill="none" stroke-linecap="round"/>
<path d="M790.6 971.3Q796.2 969.6 799.6 965.0" stroke="#5aa820" stroke-width="1.6" fill="none" stroke-linecap="round"/>
<path d="M790.6 971.3Q797.3 970.7 802.7 966.6" stroke="#a0d060" stroke-width="1.5" fill="none" stroke-linecap="round"/>
<path d="M790.6 971.3Q784.9 970.0 778.7 971.9" stroke="#88c83c" stroke-width="1.5" fill="none" stroke-linecap="round"/>
<path d="M790.6 971.3Q784.9 975.4 783.5 982.2" stroke="#3a8a28" stroke-width="2.3" fill="none" stroke-linecap="round"/>
<path d="M790.6 971.3Q784.1 972.8 779.7 977.6" stroke="#88c83c" stroke-width="1.5" fill="none" stroke-linecap="round"/>
<path d="M790.6 971.3Q785.6 972.1 781.9 975.6" stroke="#6cb828" stroke-width="2.3" fill="none" stroke-linecap="round"/>
<path d="M790.6 971.3Q783.2 970.8 776.3 974.3" stroke="#88c83c" stroke-width="1.7" fill="none" stroke-linecap="round"/>
<path d="M790.6 971.3Q785.7 972.7 782.7 976.6" stroke="#a0d060" stroke-width="1.3" fill="none" stroke-linecap="round"/>
<path d="M790.6 971.3Q799.6 972.6 808.7 968.9" stroke="#88c83c" stroke-width="1.9" fill="none" stroke-linecap="round"/>
<path d="M790.6 971.3Q786.9 974.5 786.5 979.3" stroke="#88c83c" stroke-width="1.8" fill="none" stroke-linecap="round"/>
<path d="M790.6 971.3Q788.2 966.0 781.6 962.6" stroke="#a0d060" stroke-width="2.1" fill="none" stroke-linecap="round"/>
<path d="M790.6 971.3Q792.3 975.9 797.8 979.1" stroke="#88c83c" stroke-width="1.4" fill="none" stroke-linecap="round"/>
<path d="M790.6 971.3Q796.0 974.5 803.4 974.4" stroke="#a0d060" stroke-width="2.0" fill="none" stroke-linecap="round"/>
<path d="M790.6 971.3Q783.4 966.9 773.3 967.1" stroke="#88c83c" stroke-width="1.2" fill="none" stroke-linecap="round"/>
<path d="M790.6 971.3Q788.0 977.5 791.1 984.4" stroke="#6cb828" stroke-width="1.2" fill="none" stroke-linecap="round"/>
<path d="M790.6 971.3Q786.7 974.5 786.1 979.4" stroke="#4c9a1e" stroke-width="2.3" fill="none" stroke-linecap="round"/>
<path d="M790.6 971.3Q788.2 965.5 781.2 961.8" stroke="#5aa820" stroke-width="2.0" fill="none" stroke-linecap="round"/>
<path d="M790.6 971.3Q792.4 965.2 788.8 958.9" stroke="#6cb828" stroke-width="2.3" fill="none" stroke-linecap="round"/>
<path d="M790.6 971.3Q791.8 965.5 787.8 959.7" stroke="#5aa820" stroke-width="1.2" fill="none" stroke-linecap="round"/>
<path d="M790.6 971.3Q795.9 969.5 798.9 965.1" stroke="#3a8a28" stroke-width="1.4" fill="none" stroke-linecap="round"/>
<path d="M790.6 971.3Q796.3 968.0 798.5 961.9" stroke="#4c9a1e" stroke-width="1.7" fill="none" stroke-linecap="round"/>
<path d="M790.6 971.3Q792.3 978.2 799.7 983.3" stroke="#a0d060" stroke-width="1.7" fill="none" stroke-linecap="round"/>
<path d="M790.6 971.3Q789.9 964.4 783.5 958.7" stroke="#88c83c" stroke-width="1.4" fill="none" stroke-linecap="round"/>
<rect x="1176.2" y="1356.3" width="52.5" height="47.1" rx="2" fill="#fff" stroke="#c9c9c9" stroke-width="1"/>
<path d="M1202.5 1359Q1196 1361 1190 1378Q1184 1392 1190 1395Q1202 1401 1215 1395Q1221 1392 1215 1378Q1209 1361 1202.5 1359Z" fill="#fff" stroke="#c6c6c6"/>
<circle cx="1202.5" cy="1377" r="2.2" fill="none" stroke="#c6c6c6"/><path d="M1201.3 1386V1402M1203.7 1386V1402M1196 1402L1201 1396M1209 1402L1204 1396" stroke="#c6c6c6" fill="none"/>
<line x1="482.5" y1="834" x2="1674.8" y2="828.8" stroke="#767676" stroke-width="3.45"/>
<line x1="484.3" y1="833.5" x2="484.3" y2="1409.4" stroke="#767676" stroke-width="3.45"/>
<line x1="482.5" y1="1407.6" x2="560.4" y2="1407.6" stroke="#767676" stroke-width="3.45"/>
<line x1="726.5" y1="1407.6" x2="1676.2" y2="1407.6" stroke="#767676" stroke-width="3.45"/>
<line x1="1673" y1="828.8" x2="1673" y2="936" stroke="#767676" stroke-width="3.45"/>
<rect x="1671.2" y="936" width="5" height="473.4" fill="#5f7f70" opacity="0.85"/>
<rect x="1389" y="1404.5" width="287.2" height="4.9" fill="#777f7b"/>
<line x1="1387.2" y1="829.5" x2="1387.2" y2="830.4" stroke="#767676" stroke-width="3.45"/>
<line x1="1387.2" y1="908" x2="1387.2" y2="957.6" stroke="#767676" stroke-width="3.45"/>
<line x1="1387.2" y1="1026" x2="1387.2" y2="1056.8" stroke="#767676" stroke-width="3.45"/>
<line x1="1387.2" y1="1141" x2="1387.2" y2="1206" stroke="#767676" stroke-width="3.45"/>
<line x1="1387.2" y1="1272" x2="1387.2" y2="1407.6" stroke="#767676" stroke-width="3.45"/>
<line x1="1495.4" y1="829" x2="1495.4" y2="899.5" stroke="#767676" stroke-width="3.45"/>
<line x1="602.7" y1="913.2" x2="602.7" y2="979.5" stroke="#767676" stroke-width="3.45"/>
<line x1="602.7" y1="1046" x2="602.7" y2="1107.2" stroke="#767676" stroke-width="3.45"/>
<line x1="600.9" y1="913.2" x2="658.9" y2="913.2" stroke="#767676" stroke-width="3.45"/>
<line x1="725.3" y1="913.2" x2="896.8" y2="913.2" stroke="#767676" stroke-width="3.45"/>
<line x1="964.2" y1="913.2" x2="1249" y2="913.2" stroke="#767676" stroke-width="3.45"/>
<line x1="1314.5" y1="913.2" x2="1385.4" y2="913.2" stroke="#767676" stroke-width="3.45"/>
<line x1="820.6" y1="913.2" x2="820.6" y2="1063.2" stroke="#767676" stroke-width="3.45"/>
<line x1="600.9" y1="1107.2" x2="618" y2="1107.2" stroke="#767676" stroke-width="3.45"/>
<line x1="669.7" y1="1107.2" x2="964.5" y2="1107.2" stroke="#767676" stroke-width="3.45"/>
<line x1="962.7" y1="1107.2" x2="962.7" y2="1221" stroke="#767676" stroke-width="3.45"/>
<line x1="962.7" y1="1287.4" x2="962.7" y2="1330.8" stroke="#767676" stroke-width="3.45"/>
<line x1="820.6" y1="1054.8" x2="1058.2" y2="1054.8" stroke="#767676" stroke-width="3.45"/>
<line x1="1098" y1="1054.8" x2="1184.4" y2="1054.8" stroke="#767676" stroke-width="3.45"/>
<line x1="1223.4" y1="1054.8" x2="1389" y2="1054.8" stroke="#767676" stroke-width="3.45"/>
<line x1="1125.4" y1="913.2" x2="1125.4" y2="1054.8" stroke="#767676" stroke-width="3.45"/>
<line x1="1161.4" y1="913.2" x2="1161.4" y2="1054.8" stroke="#767676" stroke-width="3.45"/>
<line x1="962.7" y1="1154.1" x2="1099.3" y2="1154.1" stroke="#767676" stroke-width="3.45"/>
<line x1="1139" y1="1154.1" x2="1184.1" y2="1154.1" stroke="#767676" stroke-width="3.45"/>
<line x1="1223.6" y1="1154.1" x2="1389" y2="1154.1" stroke="#767676" stroke-width="3.45"/>
<line x1="1162" y1="1154.1" x2="1162" y2="1407.6" stroke="#767676" stroke-width="3.45"/>
<line x1="960.9" y1="1329" x2="1034.2" y2="1329" stroke="#767676" stroke-width="3.45"/>
<line x1="1101.7" y1="1329" x2="1389" y2="1329" stroke="#767676" stroke-width="3.45"/>
<rect x="658.9" y="911.3000000000001" width="66.39999999999998" height="3.8" fill="#ebebeb" stroke="#d2d2d2" stroke-width="0.6"/>
<rect x="657.4" y="911.3000000000001" width="2" height="3.8" fill="#aaa"/><rect x="724.8" y="911.3000000000001" width="2" height="3.8" fill="#aaa"/>
<rect x="896.8" y="911.3000000000001" width="67.40000000000009" height="3.8" fill="#ebebeb" stroke="#d2d2d2" stroke-width="0.6"/>
<rect x="895.3" y="911.3000000000001" width="2" height="3.8" fill="#aaa"/><rect x="963.7" y="911.3000000000001" width="2" height="3.8" fill="#aaa"/>
<rect x="1249" y="911.3000000000001" width="65.5" height="3.8" fill="#ebebeb" stroke="#d2d2d2" stroke-width="0.6"/>
<rect x="1247.5" y="911.3000000000001" width="2" height="3.8" fill="#aaa"/><rect x="1314.0" y="911.3000000000001" width="2" height="3.8" fill="#aaa"/>
<rect x="600.8000000000001" y="979.5" width="3.8" height="66.5" fill="#ebebeb" stroke="#d2d2d2" stroke-width="0.6"/>
<rect x="600.8000000000001" y="978.0" width="3.8" height="2" fill="#aaa"/><rect x="600.8000000000001" y="1045.5" width="3.8" height="2" fill="#aaa"/>
<rect x="960.8000000000001" y="1221" width="3.8" height="66.40000000000009" fill="#ebebeb" stroke="#d2d2d2" stroke-width="0.6"/>
<rect x="960.8000000000001" y="1219.5" width="3.8" height="2" fill="#aaa"/><rect x="960.8000000000001" y="1286.9" width="3.8" height="2" fill="#aaa"/>
<rect x="1385.3" y="957.6" width="3.8" height="68.39999999999998" fill="#ebebeb" stroke="#d2d2d2" stroke-width="0.6"/>
<rect x="1385.3" y="956.1" width="3.8" height="2" fill="#aaa"/><rect x="1385.3" y="1025.5" width="3.8" height="2" fill="#aaa"/>
<rect x="1385.3" y="1056.8" width="3.8" height="84.20000000000005" fill="#ebebeb" stroke="#d2d2d2" stroke-width="0.6"/>
<rect x="1385.3" y="1055.3" width="3.8" height="2" fill="#aaa"/><rect x="1385.3" y="1140.5" width="3.8" height="2" fill="#aaa"/>
<rect x="1385.3" y="1206" width="3.8" height="66" fill="#ebebeb" stroke="#d2d2d2" stroke-width="0.6"/>
<rect x="1385.3" y="1204.5" width="3.8" height="2" fill="#aaa"/><rect x="1385.3" y="1271.5" width="3.8" height="2" fill="#aaa"/>
<rect x="1385.6" y="830.4" width="3.2" height="77.6" fill="#fff" stroke="#c4c4c4" stroke-width="0.8"/>
<rect x="1034.2" y="1327.6" width="67.5" height="2.8" fill="#fff" stroke="#b5b5b5" stroke-width="0.8"/>
<rect x="1033.2" y="1326.4" width="2" height="5.2" fill="#fff" stroke="#b5b5b5" stroke-width="0.7"/><rect x="1100.7" y="1326.4" width="2" height="5.2" fill="#fff" stroke="#b5b5b5" stroke-width="0.7"/>
<rect x="618" y="1105.4" width="51.700000000000045" height="3.6" fill="#fff" stroke="#d0d0d0" stroke-width="0.7"/>
<rect x="1058.2" y="1053.0" width="39.799999999999955" height="3.6" fill="#fff" stroke="#d0d0d0" stroke-width="0.7"/>
<rect x="1184.4" y="1053.0" width="39.0" height="3.6" fill="#fff" stroke="#d0d0d0" stroke-width="0.7"/>
<rect x="1099.3" y="1152.3" width="39.700000000000045" height="3.6" fill="#fff" stroke="#d0d0d0" stroke-width="0.7"/>
<rect x="1184.1" y="1152.3" width="39.5" height="3.6" fill="#fff" stroke="#d0d0d0" stroke-width="0.7"/>
<rect x="818.8000000000001" y="1063.2" width="3.6" height="42.200000000000045" fill="#fff" stroke="#d0d0d0" stroke-width="0.7"/>
<rect x="1493.6000000000001" y="899.5" width="3.6" height="41.5" fill="#fff" stroke="#d0d0d0" stroke-width="0.7"/>
<rect x="560.4" y="1405.8" width="166.10000000000002" height="3.6" fill="#fff" stroke="#d0d0d0" stroke-width="0.7"/>
<path d="M820.6 1064.8L862.6 1064.8A42.0 42.0 0 0 1 820.6 1106.8" fill="none" stroke="#c8c8c8" stroke-width="1.1"/>
<path d="M618.5 1107.2L618.5 1160A52 52 0 0 0 669.7 1107.2" fill="none" stroke="#c8c8c8" stroke-width="1.1"/>
<path d="M1097.4 1054.8L1097.4 1095.5A40 40 0 0 1 1058.2 1054.8" fill="none" stroke="#c8c8c8" stroke-width="1.1"/>
<path d="M1184.8 1054.8L1184.8 1095.5A40 40 0 0 0 1223.4 1054.8" fill="none" stroke="#c8c8c8" stroke-width="1.1"/>
<path d="M1138.6 1154.1L1138.6 1113.9A40 40 0 0 0 1099.3 1154.1" fill="none" stroke="#c8c8c8" stroke-width="1.1"/>
<path d="M1184.6 1154.1L1184.6 1113.9A40 40 0 0 1 1223.6 1154.1" fill="none" stroke="#c8c8c8" stroke-width="1.1"/>
<path d="M561.4 1407.6V1323.1A83 84 0 0 1 643.6 1407.6" fill="none" stroke="#c8c8c8" stroke-width="1.1"/>
<path d="M725.4 1407.6V1323.1A83 84 0 0 0 643.6 1407.6" fill="none" stroke="#c8c8c8" stroke-width="1.1"/>
<text x="744.5" y="520.3" text-anchor="middle" >Science lab</text>
<text x="1044.4" y="428" text-anchor="middle" >8th Class</text>
<text x="1342.4" y="428" text-anchor="middle" >7th Class</text>
<text x="1557.5" y="472.3" text-anchor="middle" >Bathroom</text>
<text x="745.4" y="740.9" text-anchor="middle" >Computer</text>
<text x="745.2" y="772.8" text-anchor="middle" >Lab</text>
<text x="1282" y="768.6" text-anchor="middle" >6th Class</text>
<text x="1522" y="769" text-anchor="middle" >5th Class</text>
<text x="1597.8" y="888" text-anchor="middle" >Canteen</text>
<text x="719.9" y="962" text-anchor="middle" >Principle</text>
<text x="720" y="993.7" text-anchor="middle" >Office</text>
<text x="979.7" y="987.8" text-anchor="middle" >1st Class</text>
<text x="1282" y="987.8" text-anchor="middle" >2nd Class</text>
<text x="1069" y="1264.5" text-anchor="middle" >4th Class</text>
<text x="1276.5" y="1264.5" text-anchor="middle" >3rd Class</text>
<text x="1522.3" y="1175.9" text-anchor="middle" style="fill:#0f3a24">Playground</text>
<text x="1225.4" y="1374.1" text-anchor="start" >Bathroom</text>
<circle cx="1330.2" cy="1365.5" r="33.8" fill="#fff" stroke="#c6c6c6"/>
<circle cx="1330.2" cy="1366.5" r="22.5" fill="#fff" stroke="#c6c6c6"/>
<path d="M1292.2 1331H1368.3Q1368 1338 1355 1341H1305Q1293 1338 1292.2 1331Z" fill="#fff" stroke="#c6c6c6"/>
<rect x="1304" y="1331" width="53" height="7.5" rx="2" fill="#fff" stroke="#c6c6c6" stroke-width="1"/>
<ellipse cx="1330.5" cy="1335" rx="4" ry="2" fill="#fff" stroke="#c6c6c6"/>
</svg>
<div id="topbar"></div>
<div id="toolbar"></div>
<div id="leftbar"></div>
<div id="rightbar"></div>
<div id="bottombar"></div>

<!-- top bar -->
<div class="vdiv" style="left:90px;top:30px;height:48px"></div>
<div class="abs" style="left:116px;top:22px;width:65px;height:64px;border-radius:11px;background:#e9f3fe"></div>
<div class="t" style="left:276.2px;top:36.6px;font-size:28.9px;font-weight:bold;letter-spacing:0;line-height:34px;color:#1f1f1f">school-layout</div>
<div class="vdiv" style="left:1568px;top:31px;height:47px;width:1.5px"></div>
<div class="abs" style="left:1602px;top:23px;width:188px;height:62px;border:1.5px solid #e2e2e4;border-radius:11px;background:#fff"></div>
<div class="t" style="left:1684px;top:39px;font-size:24.7px;line-height:30px;color:#1f1f1f">Export</div>
<div class="abs" style="left:1815px;top:22px;width:193px;height:64px;border-radius:9px;background:#0680fc"></div>
<div class="abs" style="left:1944px;top:22px;width:1.5px;height:64px;background:#0a70d8"></div>
<div class="t" style="left:1846.8px;top:39px;font-size:23.9px;line-height:30px;color:#fff;letter-spacing:.1px">Share</div>
<div class="vdiv" style="left:2040px;top:31px;height:47px;width:1.5px"></div>

<!-- toolbar -->
<div class="abs" style="left:300px;top:119.5px;width:173px;height:47px;border:1.5px solid #eeeef0;border-radius:9px"></div>
<div class="abs" style="left:499px;top:119.5px;width:206px;height:47px;border:1.5px solid #eeeef0;border-radius:9px"></div>
<div class="vdiv" style="left:544px;top:121px;height:44px;width:1.5px;background:#ececee"></div>
<div class="vdiv" style="left:658px;top:121px;height:44px;width:1.5px;background:#ececee"></div>
<div class="t" style="left:561.6px;top:129.4px;font-size:24.4px;line-height:28px;letter-spacing:-1.3px;color:#1f1f1f">12</div>
<div class="abs" style="left:722px;top:111px;width:64px;height:64px;border-radius:11px;background:#f0f0f2"></div>
<div class="t" style="left:740.2px;top:119.6px;font-size:41px;line-height:46px;color:#1f1f1f">B</div>
<div class="t" style="left:977.6px;top:125px;font-size:27.4px;line-height:30px;color:#1f1f1f;letter-spacing:.6px">ab</div>
<div class="vdiv" style="left:1306px;top:120px;height:47px"></div>
<div class="vdiv" style="left:1500.5px;top:120px;height:47px"></div>

<!-- left bar labels -->
<div class="lbl" style="top:265.2px">Templates</div>
<div class="lbl" style="top:385.2px">Symbols</div>
<div class="lbl" style="top:505.2px">My<br>Library</div>
<div class="lbl" style="top:649.2px">Pictures</div>
<div class="lbl" style="top:769.2px">Graphs</div>
<div class="lbl" style="top:889.2px">Text</div>
<div class="lbl" style="top:1009.2px">Icons</div>
<div class="lbl" style="top:1129.2px">More</div>

<!-- bottom bar -->
<div class="vdiv" style="left:90px;top:1533px;height:44px"></div>
<div class="t" style="left:109px;top:1541px;font-size:23.5px;line-height:30px;letter-spacing:.1px;color:#222">Page-1</div>
<div class="vdiv" style="left:344px;top:1533px;height:44px"></div>
<div class="vdiv" style="left:426px;top:1533px;height:44px"></div>
<div class="t" style="left:468.4px;top:1541px;font-size:24.8px;font-weight:bold;line-height:30px;letter-spacing:.1px;color:#2a7fd4">Page-1</div>
<div class="vdiv" style="left:590px;top:1533px;height:47px"></div>
<div class="vdiv" style="left:1130px;top:1535px;height:45px"></div>
<div class="t" style="left:1156.7px;top:1538.8px;font-size:25.3px;line-height:30px;color:#222">Number of shapes: 63.5</div>
<div class="vdiv" style="left:1452px;top:1535px;height:45px"></div>
<div class="vdiv" style="left:1654px;top:1535px;height:45px"></div>
<div class="abs" style="left:1738px;top:1553px;width:170px;height:5px;border-radius:3px;background:#e9e9eb"></div>
<div class="abs" style="left:1715.5px;top:1544px;width:24px;height:24px;border-radius:50%;background:#fff;border:3.6px solid #2a2a2a;box-shadow:0 2px 8px rgba(0,0,0,.28)"></div>
<div class="t" style="left:1983.2px;top:1541px;font-size:23.5px;line-height:30px;letter-spacing:-1.1px;color:#222">11%</div>

<!-- AI floating button -->
<div class="abs" style="left:1943px;top:216.5px;width:78.6px;height:78.2px;border-radius:14px;background:linear-gradient(215deg,#6486e0 0%,#7d78d6 45%,#cc7be0 100%);box-shadow:0 0 7px rgba(200,170,255,.75),0 6px 24px rgba(80,80,140,.22)"></div>
<div class="abs" style="left:1945.4px;top:218.9px;width:73.8px;height:73.4px;border-radius:11.6px;background:#fff"></div>
<svg id="icons" width="2148" height="1580" viewBox="0 0 2148 1580" fill="none" stroke="#1f1f1f" stroke-width="3.1" stroke-linecap="round" stroke-linejoin="round">
<defs>
<linearGradient id="aig" x1="0" y1="0.5" x2="1" y2="0.5"><stop offset="0" stop-color="#b4e2fb"/><stop offset="0.3" stop-color="#58a0f6"/><stop offset="0.55" stop-color="#5458f2"/><stop offset="1" stop-color="#8842ee"/></linearGradient>
<filter id="avb" x="-5%" y="-5%" width="110%" height="110%"><feGaussianBlur stdDeviation="0.55"/></filter>
<clipPath id="avc"><circle cx="2098.4" cy="54" r="28.6"/></clipPath>
</defs>
<!-- ===== top bar ===== -->
<g stroke-width="3.4">
<path d="M25.6 50.2L42 37.6L58.4 50.2"/>
<path d="M29.4 48V63.4Q29.4 67.8 33.8 67.8H50.2Q54.6 67.8 54.6 63.4V48"/>
<path d="M37.6 67.8V55.4H46.4V67.8"/>
</g>
<g stroke="#2b7dd2" stroke-width="3" stroke-linecap="butt"><path d="M134.3 41.8H162M134.3 53.5H162M134.3 65.6H162"/></g>
<rect x="213.8" y="39.6" width="28.2" height="26.4" rx="3.6"/>
<path d="M219.8 40V52.2H236V40"/><path d="M231.3 43.6V48.2" stroke-width="2.6"/>
<path d="M514.1 40.6L518.4 49.8L528.6 51.1L521.1 58.1L523.0 68.1L514.1 63.2L505.2 68.1L507.1 58.1L499.6 51.1L509.8 49.8Z" stroke-width="2.9" stroke="#2b2b2b"/>
<circle cx="1536.2" cy="53.8" r="15.6" stroke-width="3"/>
<path d="M1530.6 49.2A5.7 5.7 0 1 1 1539.4 54C1537 55.5 1536.2 56.6 1536.2 59" stroke-width="3"/><circle cx="1536.2" cy="63.6" r="1.9" fill="#1f1f1f" stroke="none"/>
<path d="M1645.2 50H1642Q1639 50 1639 53V64.3Q1639 67.3 1642 67.3H1660Q1663 67.3 1663 64.3V53Q1663 50 1660 50H1656.8" stroke-width="3"/>
<path d="M1651 39V59.6M1644.4 45.4L1651 38.8L1657.6 45.4" stroke-width="3"/>
<path d="M1968.6 49.6L1977.8 58.8L1987 49.6" stroke="#fff" stroke-width="3.3"/>
<!-- avatar -->
<g stroke="none">
<circle cx="2098.4" cy="54" r="32.2" fill="#f6e2a4"/>
<g clip-path="url(#avc)"><g filter="url(#avb)">
<rect x="2064" y="20" width="70" height="70" fill="#e2cfc2"/>
<rect x="2064" y="44" width="70" height="46" fill="#cdc8bc"/>
<rect x="2068" y="44" width="12" height="32" fill="#4c3d31"/>
<rect x="2070" y="52" width="8" height="3" fill="#b8a890"/>
<rect x="2079.6" y="33" width="11" height="47" fill="#d3cfc5"/>
<rect x="2089.6" y="33.5" width="22" height="6.5" fill="#80828a"/>
<rect x="2090" y="40" width="21" height="4.4" fill="#c9c6bf"/>
<rect x="2092" y="44.4" width="17.6" height="24" fill="#3f3b31"/>
<rect x="2099.5" y="48" width="8" height="10" fill="#a89046"/>
<rect x="2096" y="52" width="3" height="12" fill="#6a6250"/>
<rect x="2097" y="59" width="6" height="4" fill="#e8e4d8"/>
<rect x="2091" y="68.4" width="20" height="8" fill="#8d8778"/>
<rect x="2111.4" y="36" width="11" height="44" fill="#d8d4ca"/>
<rect x="2122" y="43" width="8" height="30" fill="#5c5242"/>
<circle cx="2083.8" cy="42.6" r="1.6" fill="#3c3a34"/><circle cx="2115.6" cy="42.6" r="1.6" fill="#3c3a34"/>
<path d="M2084 55L2079.6 78H2088.6Z" fill="#1c4a3d"/>
<path d="M2116 56L2112.6 72H2119.6Z" fill="#2b3c32"/>
<rect x="2064" y="76.5" width="70" height="14" fill="#353b31"/>
</g></g>
<path d="M2121.5 60.5L2131 66.5Q2133 69.5 2131 72L2122.5 81.5Q2121.5 82.5 2120.5 81.5L2112 72Q2110 69.5 2112 66.5Z" fill="#f5c436"/>
<path d="M2117 69.5L2121.5 74L2126.5 69.5" stroke="#fdf0b0" stroke-width="2.2" fill="none"/>
</g>

<!-- ===== toolbar ===== -->
<g stroke="#cccccc" stroke-width="2.8">
<path d="M39.4 129.4L27.4 136.8L35.8 144.4M28 136.8H44.6A9.8 9.8 0 0 1 44.6 156.4H36.6"/>
<path d="M116.6 129.4L128.6 136.8L120.2 144.4M128 136.8H111.4A9.8 9.8 0 0 0 111.4 156.4H119.4"/>
</g>
<g stroke-width="2.6">
<path d="M441.4 139.6L448 146.2L454.6 139.6"/>
<path d="M627.4 139.6L634 146.2L640.6 139.6"/>
<path d="M1179.6 142.4L1186.2 149L1192.8 142.4"/>
<path d="M1267.8 142.4L1274.4 149L1281 142.4"/>
<path d="M1461.6 138.8L1468.2 145.4L1474.8 138.8"/>
</g>
<path d="M511.4 144H530.6" stroke-width="3.4"/>
<path d="M672.6 143.8H692M682.3 134V153.6" stroke-width="3.4"/>
<!-- I -->
<path d="M830 129.8H844M824.4 156.8H838.4M837.6 129.8L830.8 156.8" stroke-width="2.9"/>
<!-- U -->
<path d="M903.6 129.6V141.4A10 10 0 0 0 923.8 141.4V129.6M901.6 157.2H926.6" stroke-width="2.9"/>
<!-- ab underline -->
<path d="M980.6 157.4H1006.8" stroke-width="5.4"/>
<!-- A -->
<path d="M1062 150L1073.8 129.8L1085.6 150M1066.4 142.8H1081.2" stroke-width="2.9"/>
<path d="M1060.6 157H1086.8" stroke-width="5.6"/>
<!-- align -->
<path d="M1139.6 130.8H1156.6M1139.6 142.6H1167.6M1139.6 154.6H1156.6" stroke-width="2.8"/>
<!-- line spacing -->
<path d="M1228.7 131V155.6M1225 134.6L1228.7 130.8L1232.4 134.6M1225 152L1228.7 155.8L1232.4 152M1225.4 139.4H1232M1225.4 147.2H1232" stroke-width="2.2"/>
<path d="M1241.6 132.6H1257.4M1241.6 142.9H1257.4M1241.6 153.2H1257.4" stroke-width="4.2"/>
<!-- T -->
<path d="M1344.2 135.2V129.6H1368.8V135.2M1356.5 129.6V156.8M1349.8 156.8H1363.2" stroke-width="3"/>
<!-- connector -->
<g stroke-width="2.8"><circle cx="1415.2" cy="132" r="2.9"/><circle cx="1440.6" cy="152.6" r="2.9"/>
<path d="M1418.2 132H1423.6Q1427.6 132 1427.6 136V148.6Q1427.6 152.6 1431.6 152.6H1437.6"/></g>
<!-- fill bucket (disabled) -->
<g stroke="#c6c6c6" stroke-width="2.6">
<path d="M1543.4 127L1559 142.4L1549.6 151.6Q1547.6 153.4 1545.6 151.6L1537.6 143.6Q1535.8 141.6 1537.6 139.8L1548.6 129"/>
<path d="M1562 147.4Q1564 150.4 1562 151.4Q1560 150.4 1562 147.4Z" fill="#c6c6c6" stroke-width="1.6"/>
</g>
<path d="M1538 157.2H1562" stroke="#e3e3e3" stroke-width="4.4"/>
<!-- brush (disabled) -->
<g stroke="#c6c6c6" stroke-width="2.6">
<path d="M1633.4 127.6Q1636.6 129 1635 132L1622 145.4L1618 141.6L1630.6 128.4Q1632 127 1633.4 127.6Z"/>
<path d="M1617.4 142.6Q1612.4 142.4 1611.4 147Q1611 150.6 1608.6 152Q1614 154 1618.4 150.6Q1621 147.6 1620.4 145.6"/>
</g>
<path d="M1610 157.2H1635" stroke="#e3e3e3" stroke-width="4.4"/>
<!-- line weight -->
<g stroke-linecap="butt"><path d="M1678 129.6H1710.6" stroke-width="2.2"/><path d="M1678 140.8H1710.6" stroke-width="3.6"/><path d="M1678 153.2H1710.6" stroke-width="6"/></g>
<!-- dashes -->
<g stroke-linecap="butt" stroke-width="3.2">
<path d="M1750.4 130.4H1757.6M1761.8 130.4H1769M1773.4 130.4H1780.6"/>
<path d="M1750.4 142.2H1756M1758.6 142.2H1764.2M1766.8 142.2H1772.4M1775 142.2H1780.6"/>
<path d="M1751.4 152.6V156.6M1758.2 152.6V156.6M1765.2 152.6V156.6M1772.4 152.6V156.6M1779.4 152.6V156.6" stroke-width="2"/>
</g>
<g fill="#1f1f1f" stroke="none"><circle cx="1826" cy="141.6" r="2.9"/><circle cx="1838" cy="141.6" r="2.9"/><circle cx="1850" cy="141.6" r="2.9"/></g>

<!-- ===== left bar ===== -->
<g stroke-width="3.2">
<rect x="28.2" y="218.2" width="27.4" height="27.4" rx="3"/><path d="M45.2 218.6L37.6 245.2M41.4 234.2H55.4"/>
<rect x="28.2" y="346.2" width="19.8" height="19.8" rx="3"/><path d="M36.6 345.6A9.6 9.6 0 1 1 48.6 357"/>
<rect x="28.2" y="470" width="27.4" height="16" rx="3"/><path d="M36.2 478.4H48.2"/>
<path d="M30.2 469.2Q31.4 461.6 37.4 459.6Q40.6 459.2 42.4 461.4Q48.4 457.4 52 463Q53.6 465.6 53.8 469.2M42.4 461.4Q46.4 464 47 469"/>
<rect x="28.2" y="602" width="27.4" height="27.4" rx="3"/><circle cx="48.9" cy="608.6" r="1.9" fill="#1f1f1f" stroke="none"/>
<path d="M28.6 611.8Q42.4 614.8 47.2 629M55.2 616.8Q47.4 619 45.2 624.4"/>
<path d="M27.6 721V750.8H57.6M32 738L40.4 729.6L48.9 737L56.4 730"/>
<rect x="28.2" y="842" width="27.4" height="27.4" rx="3"/><path d="M34 851.8V848.2H50V851.8M42 848.2V863.2M37.2 863.2H46.8" stroke-width="3"/>
<rect x="28.2" y="962" width="27.4" height="27.4" rx="3"/><path d="M41.8 967.8L50.6 974.4L47.2 983H36.4L33 974.4Z" stroke-width="3"/>
</g>
<g fill="#1f1f1f" stroke="none">
<rect x="27.3" y="1081.2" width="5.4" height="5.4" rx="1.9"/><rect x="39.3" y="1081.2" width="5.4" height="5.4" rx="1.9"/><rect x="51.3" y="1081.2" width="5.4" height="5.4" rx="1.9"/>
<rect x="27.3" y="1093.2" width="5.4" height="5.4" rx="1.9"/><rect x="39.3" y="1093.2" width="5.4" height="5.4" rx="1.9"/><rect x="51.3" y="1093.2" width="5.4" height="5.4" rx="1.9"/>
<rect x="27.3" y="1105.3" width="5.4" height="5.4" rx="1.9"/><rect x="39.3" y="1105.3" width="5.4" height="5.4" rx="1.9"/><rect x="51.3" y="1105.3" width="5.4" height="5.4" rx="1.9"/>
</g>

<!-- ===== right bar ===== -->
<g stroke-width="3.1">
<path d="M2099.4 225.4L2117.4 243.6Q2119 245.4 2117.4 247.2L2105 259.6Q2103.4 261 2101.8 259.6L2089.6 247.2Q2088 245.4 2089.6 243.6L2103.6 229.8M2092.6 249.4H2114.6"/>
<path d="M2119.2 253.4Q2122 257.4 2119.2 258.6Q2116.4 257.4 2119.2 253.4Z" fill="#1f1f1f" stroke-width="1.4"/>
<path d="M2119.2 329.6V325.4Q2119.2 321.4 2115.2 321.4H2093.4Q2089.4 321.4 2089.4 325.4V346.4Q2089.4 350.4 2093.4 350.4H2096.6"/>
<path d="M2102 336.8H2119M2102 346.2H2119M2114 333.6V340M2107.6 343V349.4" stroke-width="2.9"/>
<path d="M2113.2 422L2103.8 413Q2102.2 411.6 2100.6 413L2092.2 420.8Q2089.6 423.6 2091.6 426.4Q2094.6 430 2091.6 432.6L2088.4 435.4Q2085.6 438.6 2088.4 441.6Q2091.6 444.4 2095 441.8L2097.6 439.6Q2100.6 437.2 2104 439Q2108 440.6 2111 438L2113.9 435.4L2096.2 417.7"/>
<path d="M2115.9 424.4Q2116.5 426.9 2119 427.5Q2116.5 428.1 2115.9 430.6Q2115.3 428.1 2112.8 427.5Q2115.3 426.9 2115.9 424.4Z" fill="#1f1f1f" stroke-width="0.8"/><path d="M2119.4 433.1L2121.4 435.1L2119.4 437.1L2117.4 435.1Z" fill="#1f1f1f" stroke-width="0.6"/>
<path d="M2111.4 503.8H2093.6Q2090 503.8 2090 507.4V532.4Q2090 536 2093.6 536H2114.2Q2117.8 536 2117.8 532.4V510.4Z"/>
<path d="M2111.6 504.4V510.6H2117.4Z" fill="#1f1f1f" stroke-width="1.6"/>
<path d="M2101.6 518H2112.6M2101.6 526.2H2112.6" stroke-width="3"/>
<rect x="2094.2" y="516.4" width="3.3" height="3.3" rx="0.6" fill="#1f1f1f" stroke="none"/><rect x="2094.2" y="524.6" width="3.3" height="3.3" rx="0.6" fill="#1f1f1f" stroke="none"/>
<path d="M2089.2 618.4A14.7 14.7 0 1 0 2092.4 602.6"/>
<path d="M2088.6 599.4V607.8H2097"/>
<path d="M2102.4 607.4V613.6L2108.4 617.2"/>
<path d="M2090.2 1466H2117.8M2090.2 1478H2099.4M2090.2 1490H2097.8" stroke-width="3.5"/>
<path d="M2120.6 1485.0L2116.3 1492.5L2107.7 1492.5L2103.4 1485.0L2107.7 1477.5L2116.3 1477.5Z" stroke-width="4.4"/>
<circle cx="2112" cy="1485" r="2.7" fill="#1f1f1f" stroke="none"/>
</g>
<!-- AI stars -->
<path d="M1980.0 241.8C1981.3 252.3 1985.7 256.7 1996.2 258.0C1985.7 259.3 1981.3 263.7 1980.0 274.2C1978.7 263.7 1974.3 259.3 1963.8 258.0C1974.3 256.7 1978.7 252.3 1980.0 241.8Z" fill="url(#aig)" stroke="none"/>
<path d="M1993.7 236.9C1994.3 241.5 1996.2 243.3 2000.7 243.9C1996.2 244.5 1994.3 246.3 1993.7 250.9C1993.1 246.3 1991.2 244.5 1986.7 243.9C1991.2 243.3 1993.1 241.5 1993.7 236.9Z" fill="#3f6de0" stroke="none"/>

<!-- ===== bottom bar ===== -->
<g stroke-width="3" stroke="#222">
<rect x="42.4" y="1542.2" width="15.8" height="27.2" rx="1"/>
<path d="M33 1542.2H36.4V1569.4H33M67.4 1542.2H64V1569.4H67.4" stroke-linecap="butt" stroke-linejoin="miter"/>
<path d="M372.4 1555.8H399.6M386 1542.2V1569.4"/>
<path d="M1501.9 1542.2L1516.6 1551Q1518.2 1552.1 1516.6 1553.2L1503.4 1560.6Q1501.9 1561.4 1500.4 1560.6L1487.4 1553.2Q1485.8 1552.1 1487.4 1551Z"/>
<path d="M1487 1560.4L1500.4 1568.8Q1501.9 1569.6 1503.4 1568.8L1517 1560.4"/>
<path d="M1589.4 1546.4L1601 1542.4L1612.2 1546.2L1622.6 1542.4V1566.4L1612.2 1570.2L1601 1566.4L1589.4 1570.2ZM1601 1542.4V1566.4M1612.2 1546.2V1570.2"/>
<path d="M1683 1556H1700.4M1935 1556H1953.4M1944.2 1546.8V1565.2" stroke-width="3.3"/>
</g>
<g stroke="#555" stroke-width="2.6">
<path d="M302.6 1550.6L310.2 1558.2L317.8 1550.6"/>
<path d="M1531.4 1551.4L1537.8 1557.8L1544.2 1551.4" stroke="#333"/>
<path d="M2039.6 1550L2046 1556.4L2052.4 1550" stroke="#333"/>
</g>
<path d="M2092 1551V1545.2Q2092 1542.2 2095 1542.2H2100.6M2111.2 1542.2H2116.8Q2119.8 1542.2 2119.8 1545.2V1551M2119.8 1561V1566.6Q2119.8 1569.6 2116.8 1569.6H2111.2M2100.6 1569.6H2095Q2092 1569.6 2092 1566.6V1561" stroke="#444" stroke-width="3.3"/>
</svg>
<div id="menu">
<div class="mi" style="top:28px;left:32.5px;letter-spacing:.2px">File</div><div class="arr" style="top:39px"></div>
<div class="mi" style="top:88px">Edit</div><div class="arr" style="top:99px"></div>
<div class="mi" style="top:148px">Select</div><div class="arr" style="top:159px"></div>
<div class="mi" style="top:208px">Insert</div><div class="arr" style="top:219px"></div>
<div class="mi" style="top:268px">Layout</div><div class="arr" style="top:279px"></div>
<div class="abs" style="left:5px;top:310px;width:284px;height:70px;border:6px solid #dd4f45"></div>
<div class="mi" style="top:328px">View</div><div class="arr" style="top:339px"></div>
<div class="mi" style="top:388px;letter-spacing:1.35px">Symbol</div><div class="arr" style="top:399px"></div>
<div class="mi" style="top:448px;letter-spacing:-.5px">AI</div><div class="arr" style="top:459px"></div>
</div>
<svg width="2148" height="1580" viewBox="0 0 2148 1580">
<path d="M194.0 536.5C195.2 543.8 198.9 547.5 206.2 548.7C198.9 549.9 195.2 553.6 194.0 560.9C192.8 553.6 189.1 549.9 181.8 548.7C189.1 547.5 192.8 543.8 194.0 536.5Z" fill="#5c6df2"/>
<path d="M206.8 530.6C207.4 534.1 209.1 535.8 212.6 536.4C209.1 537.0 207.4 538.7 206.8 542.2C206.2 538.7 204.5 537.0 201.0 536.4C204.5 535.8 206.2 534.1 206.8 530.6Z" fill="#b472e2"/>
</svg>
</body>
</html>
